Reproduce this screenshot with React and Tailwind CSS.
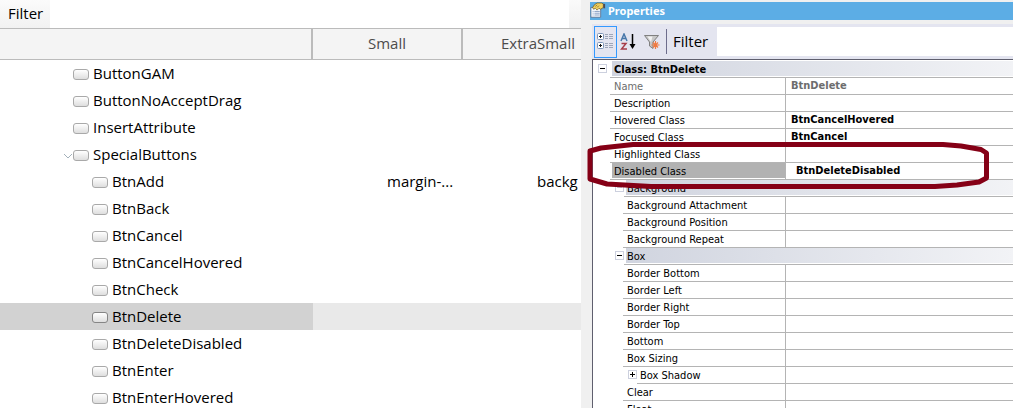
import React from "react";

const treeRows = [
  { name: "ButtonGAM", level: 0 },
  { name: "ButtonNoAcceptDrag", level: 0 },
  { name: "InsertAttribute", level: 0 },
  { name: "SpecialButtons", level: 0, open: true },
  { name: "BtnAdd", level: 1, small: "margin-...", extraSmall: "backg" },
  { name: "BtnBack", level: 1 },
  { name: "BtnCancel", level: 1 },
  { name: "BtnCancelHovered", level: 1 },
  { name: "BtnCheck", level: 1 },
  { name: "BtnDelete", level: 1, selected: true },
  { name: "BtnDeleteDisabled", level: 1 },
  { name: "BtnEnter", level: 1 },
  { name: "BtnEnterHovered", level: 1 },
];

const propertyRows = [
  { name: "Class: BtnDelete", kind: "root" },
  { name: "Name", level: 0, value: "BtnDelete", readOnly: true },
  { name: "Description", level: 0 },
  { name: "Hovered Class", level: 0, value: "BtnCancelHovered" },
  { name: "Focused Class", level: 0, value: "BtnCancel" },
  { name: "Highlighted Class", level: 0 },
  { name: "Disabled Class", level: 0, value: "BtnDeleteDisabled", selected: true },
  { name: "Background", kind: "group" },
  { name: "Background Attachment", level: 1 },
  { name: "Background Position", level: 1 },
  { name: "Background Repeat", level: 1 },
  { name: "Box", kind: "group" },
  { name: "Border Bottom", level: 1 },
  { name: "Border Left", level: 1 },
  { name: "Border Right", level: 1 },
  { name: "Border Top", level: 1 },
  { name: "Bottom", level: 1 },
  { name: "Box Sizing", level: 1 },
  { name: "Box Shadow", level: 2 },
  { name: "Clear", level: 1 },
  { name: "Float", level: 1 },
];

function ButtonGlyph({ strong }) {
  return (
    <span
      aria-hidden="true"
      className={
        "mt-1 h-[11px] w-4 shrink-0 rounded-[3px] border bg-linear-to-b from-white to-[#dedede] " +
        (strong ? "border-[#858585]" : "border-[#a9a9a9]")
      }
    />
  );
}

function TreePanel() {
  return (
    <section className="min-w-0 flex-[581] overflow-hidden bg-white font-['Open_Sans','Noto_Sans',sans-serif] text-[15px]">
      <div className="flex h-7">
        <label
          htmlFor="tree-filter"
          className="flex w-[50px] items-center bg-linear-to-b from-[#fbfbfb] to-[#f1f1f1] pb-0.5 pl-2"
        >
          Filter
        </label>
        <input id="tree-filter" className="min-w-0 flex-1 outline-none" />
        <span className="w-3 bg-linear-to-b from-[#fafafa] to-[#f0f0f0]" />
      </div>
      <table className="w-[613px] table-fixed border-separate border-spacing-0">
        <thead>
          <tr className="h-8 bg-[#f4f4f4] text-[#4c4c4c]">
            <th scope="col" aria-label="Class" className="w-[313px] border-y border-r-2 border-[#bbb] p-0" />
            <th scope="col" className="w-[150px] border-y border-r-2 border-[#bbb] p-0 pb-0.5 font-normal">
              Small
            </th>
            <th scope="col" className="w-[150px] border-y border-[#bbb] p-0 pb-0.5 font-normal">
              ExtraSmall
            </th>
          </tr>
        </thead>
        <tbody>
          {treeRows.map((row) => (
            <tr key={row.name} className={row.selected ? "h-[27px] bg-[#e9e9e9]" : "h-[27px]"}>
              <td className={row.selected ? "bg-[#d2d2d2] p-0" : "p-0"}>
                <div
                  className={
                    "flex items-center gap-1 pb-0.5 " +
                    (row.level ? "pl-[92px]" : row.open ? "pl-[63px]" : "pl-[73px]")
                  }
                >
                  {row.open ? (
                    <button type="button" aria-label="Collapse SpecialButtons" className="-mr-1 w-[10px] pt-1">
                      <svg viewBox="0 0 10 6" className="h-[6px] w-[10px]" fill="none" stroke="#a3b1ba">
                        <path d="M1 1l4 4 4-4" />
                      </svg>
                    </button>
                  ) : null}
                  <ButtonGlyph strong={row.selected} />
                  <span className="leading-[22px]">{row.name}</span>
                </div>
              </td>
              <td className="p-0 pl-[74px] whitespace-nowrap">{row.small}</td>
              <td className="p-0 pl-[74px] whitespace-nowrap">{row.extraSmall}</td>
            </tr>
          ))}
        </tbody>
      </table>
    </section>
  );
}

function Expander({ label, open, faint }) {
  return (
    <button
      type="button"
      aria-label={label}
      className="mt-[3px] flex size-[9px] shrink-0 items-center justify-center border border-[#ccd0de] bg-white"
    >
      <svg viewBox="0 0 5 5" className="size-[5px]" fill={faint ? "#c5c9d6" : "#000"} shapeRendering="crispEdges">
        <rect x="0" y="2" width="5" height="1" />
        {open ? null : <rect x="2" y="0" width="1" height="5" />}
      </svg>
    </button>
  );
}

function PropertyRow({ row }) {
  if (row.kind) {
    const root = row.kind === "root";
    return (
      <tr className="h-[17px]">
        <th scope="rowgroup" colSpan={2} className="p-0 text-left font-normal">
          <div className={root ? "flex h-[17px] pl-[5px]" : "flex h-[17px] pl-[22px]"}>
            <Expander label={"Collapse " + row.name} open faint={row.name === "Background"} />
            <div className={"flex-1 border-b border-[#b4b4b4] " + (root ? "ml-[3px]" : "")}>
              <div
                className={
                  "ml-[2px] h-[15px] bg-linear-to-r from-[#d0d4df] to-[#f2f3f6] leading-[17px] " +
                  (root ? "pl-[2px] font-bold" : "pl-px")
                }
              >
                {row.name}
              </div>
            </div>
          </div>
        </th>
      </tr>
    );
  }
  return (
    <tr className="h-[17px]">
      <th scope="row" className="p-0 text-left font-normal">
        <div className={"flex h-[17px] " + ["pl-[17px]", "pl-[30px]", "pl-[35px]"][row.level]}>
          {row.level === 2 ? <Expander label="Expand Box Shadow" /> : null}
          <div className="flex-1 border-b border-[#b4b4b4]">
            <div
              className={
                "ml-[2px] h-[15px] leading-[17px] " +
                (row.level === 2 ? "pl-px " : "pl-[2px] ") +
                (row.selected ? "bg-[#b2b2b2]" : row.readOnly ? "text-[#6d6d6d]" : "")
              }
            >
              {row.name}
            </div>
          </div>
        </div>
      </th>
      <td
        className={
          "border-b border-l border-[#b4b4b4] p-0 leading-4 font-bold " +
          (row.selected ? "pl-[10px]" : row.readOnly ? "pl-[5px] text-[#6d6d6d]" : "pl-[5px]")
        }
      >
        {row.value}
      </td>
    </tr>
  );
}

function PropertiesPanel() {
  return (
    <section className="relative min-w-0 flex-[432] bg-[#f0f0f0]">
      <div className="pt-[2px] pl-[9px]">
        <header className="flex h-[18px] items-center bg-[#5cade5] font-['Noto_Sans','Open_Sans',sans-serif] text-[11px] font-bold text-white">
          <svg viewBox="0 0 18 18" className="h-[18px] w-4">
            <path d="M1 5h11v11H1z" fill="#f7faff" stroke="#5f7391" />
            <path d="M3 9.500h1M5 9.500h6M3 11.500h1M5 11.500h6M3 13.500h1M5 13.500h6" stroke="#7f97bd" />
            <path d="M3 5l2-3 3-2h5l2 1v4l-3 2-2-1-2 2-2-2-2 1z" fill="#f0d060" stroke="#6b551b" strokeWidth=".8" />
            <path d="M6 4l2-2M8 5l2-2" stroke="#6b551b" strokeWidth=".8" />
            <path d="M15 1h2v5h-2z" fill="#4b4b55" />
          </svg>
          <h2 className="pl-[2px]">Properties</h2>
        </header>
      </div>
      <div className="pt-1 pl-[11px]">
        <div className="flex h-[35px] items-center bg-[#e4e5f0] pl-[2px] font-['Open_Sans','Noto_Sans',sans-serif] text-[15px]">
          <button
            type="button"
            aria-label="Categorized"
            className="flex h-8 w-[23px] items-center justify-center border border-[#3399ff]"
          >
            <svg viewBox="0 0 17 17" className="size-[17px]" fill="none">
              <rect x=".5" y=".5" width="6" height="6" rx="1" fill="#fff" stroke="#7f96b8" />
              <rect x=".5" y="9.500" width="6" height="6" rx="1" fill="#fff" stroke="#7f96b8" />
              <path d="M2 3.500h3M3.500 2v3M2 12.500h3M3.500 11v3" stroke="#111" />
              <path
                d="M8 1.500h3M12 1.500h4M8 3.500h3M12 3.500h4M8 5.500h3M12 5.500h4M8 10.500h3M12 10.500h4M8 12.500h3M12 12.500h4M8 14.500h3M12 14.500h4"
                stroke="#9ea6b8"
              />
            </svg>
          </button>
          <button type="button" aria-label="Alphabetical" className="ml-[3px]">
            <svg viewBox="0 0 16 18" className="h-[18px] w-4" fill="none">
              <path d="M1 8l3-7 3 7M2 5.500h4" stroke="#4878aa" strokeWidth="1.500" />
              <path d="M1.500 10.500H6L1.500 16H7" stroke="#a63c49" strokeWidth="1.500" />
              <path d="M12.500 1v13" stroke="#000" strokeWidth="1.500" />
              <path d="M9.500 11h6l-3 5z" fill="#000" />
            </svg>
          </button>
          <button type="button" aria-label="Clear filter" className="ml-2">
            <svg viewBox="0 0 16 16" className="size-4" fill="none">
              <path d="M.5 1.500h14L9 8v6.500L5.500 12V8z" fill="#c8c8c8" stroke="#808080" />
              <path d="M3.500 2.500h5L7 8z" fill="#f2f2f2" />
              <path d="M11.500 7v8M7.500 11h8M9 8.500l5 5M14 8.500l-5 5" stroke="#f07a40" strokeWidth="1.200" />
            </svg>
          </button>
          <span className="ml-[6px] h-[25px] w-px bg-[#6d6d8c]" />
          <label htmlFor="property-filter" className="w-[50px] pl-[6px]">
            Filter
          </label>
          <input id="property-filter" className="h-[29px] min-w-0 flex-1 bg-white outline-none" />
        </div>
        <div className="border-t border-l border-[#5f5f6e] bg-white pt-px">
          <table className="w-full table-fixed border-separate border-spacing-0 font-['DejaVu_Sans_Condensed','DejaVu_Sans',sans-serif] text-[11px] whitespace-nowrap text-black">
            <colgroup>
              <col className="w-[192px]" />
              <col />
            </colgroup>
            <tbody>
              {propertyRows.map((row) => (
                <PropertyRow key={row.name} row={row} />
              ))}
            </tbody>
          </table>
        </div>
      </div>
      <svg
        aria-hidden="true"
        viewBox="0 0 410 60"
        className="pointer-events-none absolute top-[135px] left-0 h-[60px] w-[410px]"
        fill="none"
        stroke="#850016"
        strokeWidth="5"
        strokeLinejoin="round"
      >
        <path d="M9 16L20 13L52 9.500H362L380 11L400 14.500L405.500 18V43L398 47L376 50L354 51.500H70L26 49L9 44Z" />
      </svg>
    </section>
  );
}

export default function App() {
  return (
    <main className="flex h-screen overflow-hidden text-black">
      <TreePanel />
      <PropertiesPanel />
    </main>
  );
}
